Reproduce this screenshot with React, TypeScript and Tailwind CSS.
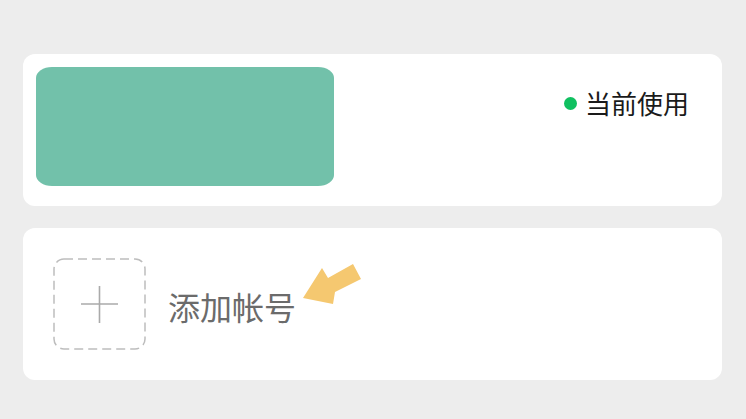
import React from 'react';

// Account switcher: current account card + "add account" card
const AccountCard: React.FC = () => (
  <div className="flex h-[152px] items-start justify-between rounded-[12px] bg-white pl-[13px] pr-[33px] pt-[13px]">
    <div className="h-[119px] w-[298px] rounded-[16px/11px] bg-[#72c1aa]" />
    <div className="mt-[19px] flex items-center gap-[8px]">
      <span className="h-[13px] w-[13px] rounded-full bg-[#10c060]" />
      <span className="text-[26px] leading-[34px] text-[#1a1a1a]">当前使用</span>
    </div>
  </div>
);

const AddAccountCard: React.FC = () => (
  <div className="relative flex h-[152px] items-center rounded-[12px] bg-white pl-[30px]">
    <svg width="93" height="92" viewBox="0 0 93 92" className="shrink-0">
      <rect
        x="1"
        y="1"
        width="91"
        height="90"
        rx="10"
        fill="none"
        stroke="#bdbdbd"
        strokeWidth="1.5"
        strokeDasharray="9 5"
      />
      <path d="M28 46h37M46.5 28v37" stroke="#aaaaaa" strokeWidth="1.6" />
    </svg>
    <span className="ml-[22px] mt-[3px] text-[32px] leading-[40px] text-[#6b6b6b]">添加帐号</span>
    {/* pointer arrow */}
    <svg
      className="absolute left-[257px] top-[30px]"
      width="90"
      height="50"
      viewBox="280 258 90 50"
    >
      <polygon
        points="303,298 322,268 328,278 353,264 361,279 335,292 333,304"
        fill="#f5c870"
      />
    </svg>
  </div>
);

export default function App() {
  return (
    <div
      className="flex h-[419px] w-[746px] flex-col gap-[22px] bg-[#ededed] pl-[23px] pr-[24px] pt-[54px]"
      style={{ fontFamily: '"Noto Sans CJK SC", "Noto Sans", sans-serif' }}
    >
      <AccountCard />
      <AddAccountCard />
    </div>
  );
}
